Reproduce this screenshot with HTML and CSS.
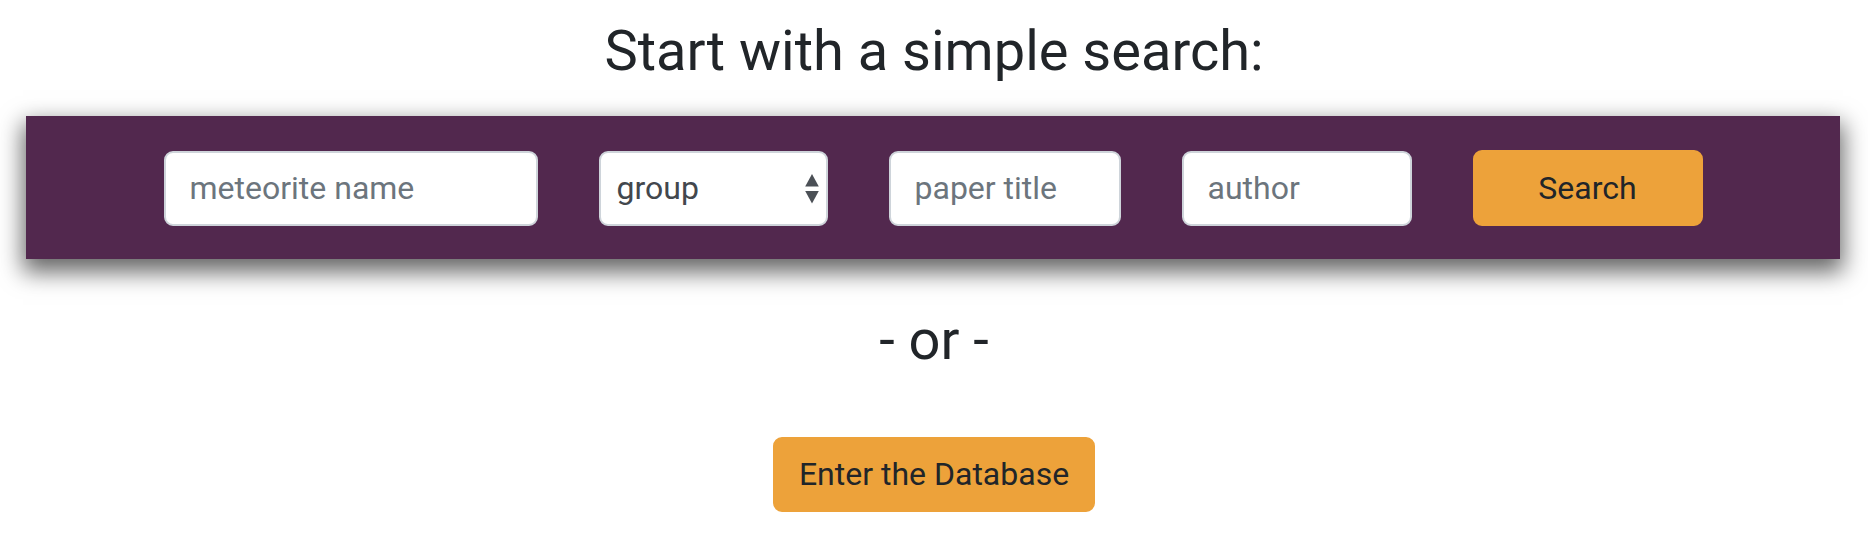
FILE: index.html
```html
<!DOCTYPE html>
<html lang="en">
<head>
<meta charset="utf-8">
<title>Meteorite search</title>
<link rel="stylesheet" href="styles.css">
</head>
<body>
<main class="page">
  <h3 class="heading">Start with a simple search:</h3>
  <form class="search-bar">
    <input class="field field-name" type="text" placeholder="meteorite name">
    <div class="select-wrap">
      <select class="field field-select">
        <option>group</option>
      </select>
      <svg class="select-arrows" width="14" height="30" viewBox="0 0 14 30" aria-hidden="true">
        <polygon points="7,0 13.8,12.5 0.2,12.5" fill="#4b5056"/>
        <polygon points="0.2,17 13.8,17 7,29.5" fill="#4b5056"/>
      </svg>
    </div>
    <input class="field field-title" type="text" placeholder="paper title">
    <input class="field field-author" type="text" placeholder="author">
    <button class="btn btn-search" type="button">Search</button>
  </form>
  <h3 class="or">- or -</h3>
  <button class="btn btn-enter" type="button">Enter the Database</button>
</main>
</body>
</html>
```

FILE: styles.css
```css
* { box-sizing: border-box; }

html, body {
  margin: 0;
  padding: 0;
  background: #ffffff;
}

body {
  font-family: Roboto, "Liberation Sans", Arial, sans-serif;
  color: #212529;
}

.page {
  display: flex;
  flex-direction: column;
  align-items: center;
  padding-top: 18px;
}

.heading {
  margin: 0;
  font-size: 56px;
  font-weight: 400;
  line-height: 67px;
  color: #212529;
}

.search-bar {
  align-self: stretch;
  margin: 31px 28px 0 26px;
  height: 143px;
  background: #52284e;
  box-shadow: 0 10px 22px 3px rgba(0, 0, 0, 0.6);
  display: flex;
  align-items: center;
  justify-content: center;
  gap: 61px;
  padding-top: 1px;
}

.field {
  height: 75px;
  border: 2px solid #ced4da;
  border-radius: 9px;
  background: #ffffff;
  font-family: Roboto, "Liberation Sans", Arial, sans-serif;
  font-size: 32px;
  color: #495057;
  padding: 0 24px;
  outline: none;
}

.field::placeholder {
  color: #6c757d;
  opacity: 1;
}

.field-name { width: 374px; }
.field-title { width: 232px; }
.field-author { width: 230px; }

.select-wrap {
  position: relative;
  width: 229px;
  height: 75px;
}

.field-select {
  width: 100%;
  appearance: none;
  -webkit-appearance: none;
  padding: 0 40px 0 16px;
  color: #42474d;
}

.select-arrows {
  position: absolute;
  right: 9px;
  top: 23px;
  pointer-events: none;
}

.btn {
  font-family: Roboto, "Liberation Sans", Arial, sans-serif;
  font-size: 32px;
  font-weight: 400;
  color: #212529;
  background: #eda23a;
  border: 2px solid #eda23a;
  border-radius: 9px;
  line-height: 47px;
  padding: 12px 24px;
  cursor: pointer;
}

.btn-search {
  width: 230px;
  height: 76px;
}

.or {
  margin: 48px 0 0;
  font-size: 56px;
  font-weight: 400;
  line-height: 67px;
  color: #212529;
}

.btn-enter {
  margin-top: 63px;
  height: 75px;
}
```
